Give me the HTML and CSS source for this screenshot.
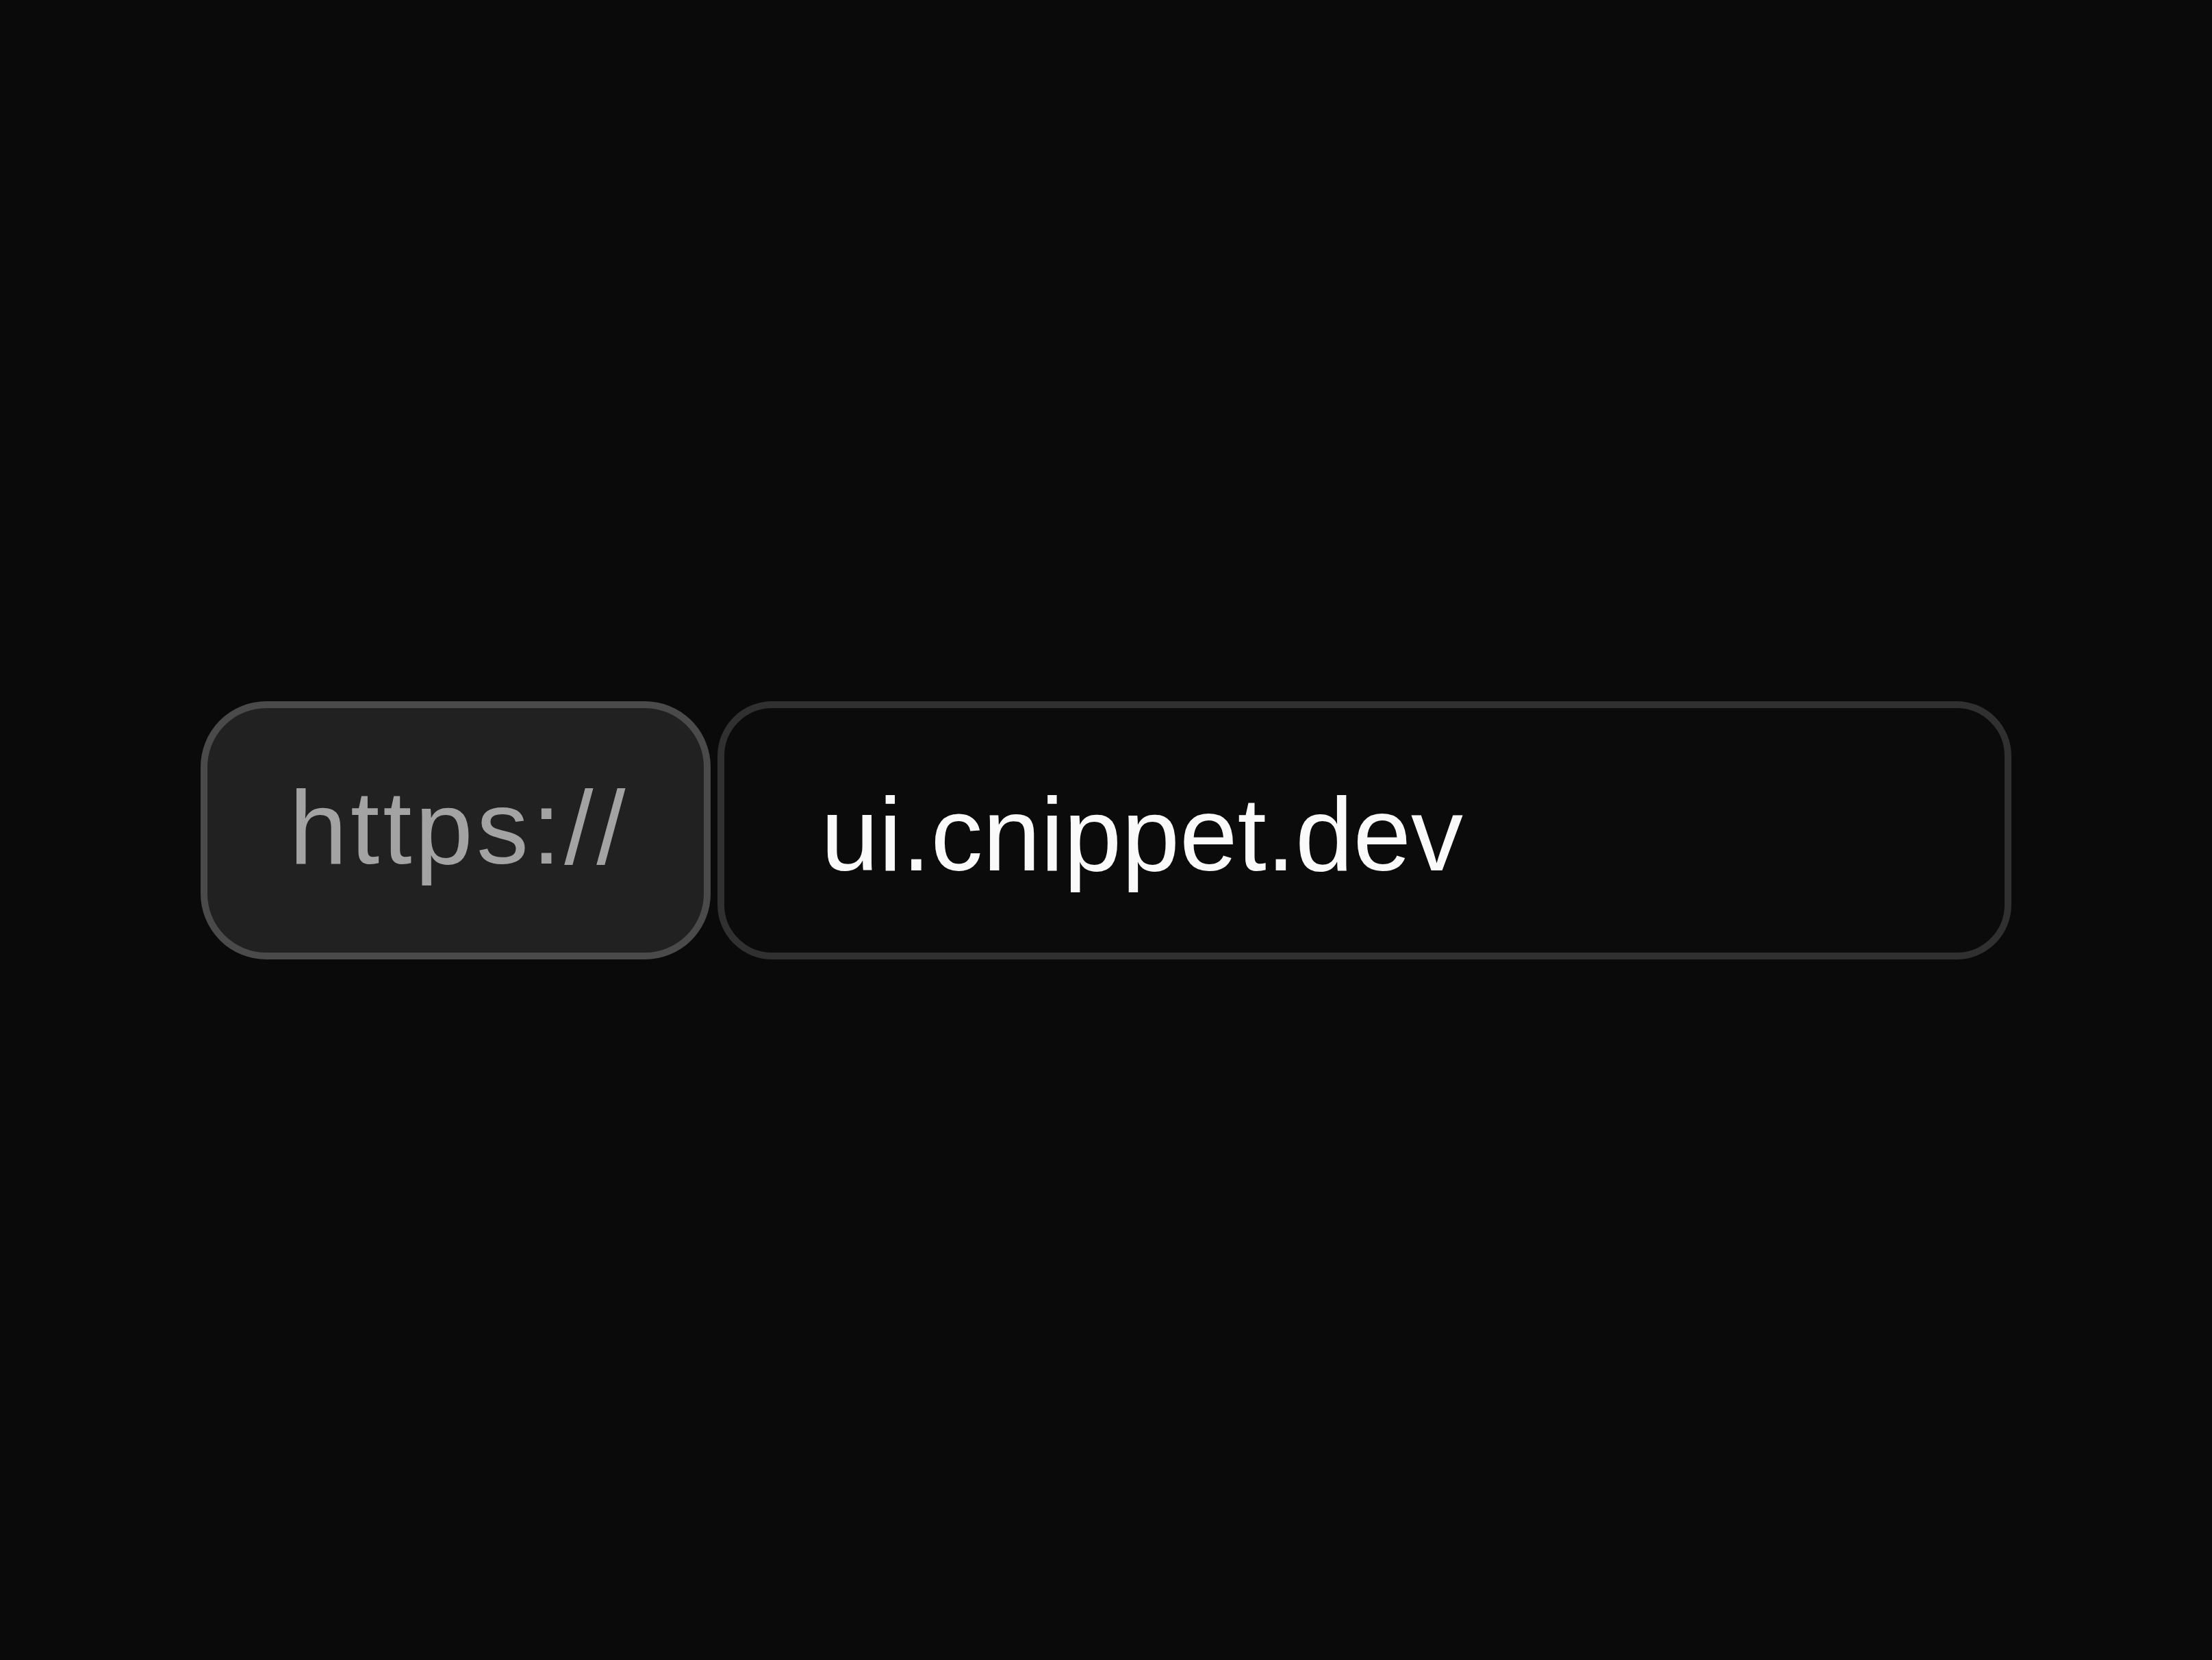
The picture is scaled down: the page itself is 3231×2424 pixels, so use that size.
FILE: index.html
```html
<!DOCTYPE html>
<html lang="en">
<head>
<meta charset="utf-8">
<title>URL input</title>
<link rel="stylesheet" href="styles.css">
</head>
<body>
  <div class="url-field">
    <span class="url-prefix">https://</span>
    <input class="url-input" type="text" value="ui.cnippet.dev" aria-label="URL">
  </div>
</body>
</html>
```
FILE: styles.css
```css
html, body {
  margin: 0;
  height: 100%;
}
body {
  background: #0a0a0a;
  display: flex;
  align-items: center;
  justify-content: center;
  font-family: "Liberation Sans", Arial, sans-serif;
}
.url-field {
  display: flex;
  gap: 10px;
}
.url-prefix {
  box-sizing: border-box;
  width: 745px;
  height: 377px;
  border: 10px solid #4a4a4a;
  border-radius: 96px;
  background: #212121;
  color: #a3a3a3;
  font-size: 152px;
  letter-spacing: 5px;
  display: flex;
  align-items: center;
  justify-content: center;
  padding: 0 0 8px 10px;
}
.url-input {
  box-sizing: border-box;
  width: 1890px;
  height: 377px;
  border: 10px solid #303030;
  border-radius: 80px;
  background: #0b0b0b;
  color: #fafafa;
  font-family: "Liberation Sans", Arial, sans-serif;
  font-size: 152px;
  padding: 12px 40px 0 141px;
  margin: 0;
  outline: none;
}
```
